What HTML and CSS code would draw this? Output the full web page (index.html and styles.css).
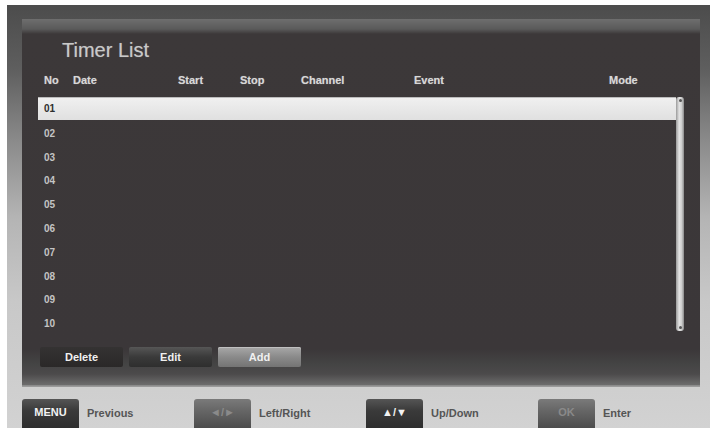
FILE: index.html
```html
<!DOCTYPE html>
<html>
<head>
<meta charset="utf-8">
<link rel="stylesheet" href="styles.css">
</head>
<body>
<div class="frame">
  <div class="panel">
    <div class="title">Timer List</div>
    <div class="head">
      <span>No</span><span>Date</span><span>Start</span><span>Stop</span><span>Channel</span><span>Event</span><span>Mode</span>
    </div>
    <div class="listwrap">
      <div class="list">
        <div class="row sel">01</div>
        <div class="row">02</div>
        <div class="row">03</div>
        <div class="row">04</div>
        <div class="row">05</div>
        <div class="row">06</div>
        <div class="row">07</div>
        <div class="row">08</div>
        <div class="row">09</div>
        <div class="row">10</div>
      </div>
      <div class="scroll"><span class="dot"></span><span class="dot"></span></div>
    </div>
    <div class="btns">
      <div class="btn del">Delete</div>
      <div class="btn edit">Edit</div>
      <div class="btn add">Add</div>
    </div>
  </div>
  <div class="footer">
    <div class="group"><div class="key dark">MENU</div><span class="lbl">Previous</span></div>
    <div class="group"><div class="key grey">◄/►</div><span class="lbl">Left/Right</span></div>
    <div class="group"><div class="key dark">▲/▼</div><span class="lbl">Up/Down</span></div>
    <div class="group"><div class="key grey">OK</div><span class="lbl">Enter</span></div>
  </div>
</div>
</body>
</html>
```

FILE: styles.css
```css
html, body {
  margin: 0;
  padding: 0;
  background: #ffffff;
}
body {
  font-family: "Liberation Sans", Arial, sans-serif;
  width: 718px;
  height: 437px;
  overflow: hidden;
}
.frame {
  margin: 5px 8px 0 7px;
  width: 703px;
  height: 423px;
  box-sizing: border-box;
  padding: 14px 10px 0 15px;
  background: linear-gradient(to bottom, #4c4c4c 0%, #5e5e5e 15%, #8a8a8a 32%, #b4b4b4 50%, #c8c8c8 70%, #d2d2d2 100%);
  overflow: hidden;
}
.panel {
  height: 367px;
  box-sizing: border-box;
  padding-top: 19px;
  background: linear-gradient(to bottom, #6e6e6e 0px, #5a5a5a 10px, #3c3839 15px, #3b3739 330px, #444 345px, #4c4a4b 355px, #6d6d6d 366px);
  border-bottom: 1px solid #8c8c8c;
  box-shadow: 0 1px 0 #9a9a9a;
}
.title {
  margin-left: 40px;
  font-size: 20px;
  line-height: 24px;
  color: #c9c9c9;
  text-shadow: 0 0 1px rgba(200,200,200,0.5);
}
.head {
  margin-top: 11px;
  padding-left: 22px;
  display: grid;
  grid-template-columns: 29px 105px 62px 61px 113px 195px auto;
  font-size: 11px;
  font-weight: bold;
  line-height: 14px;
  color: #d8d8d8;
  text-shadow: 0 0 1px rgba(255,255,255,0.4);
}
.listwrap {
  margin-top: 10px;
  margin-left: 16px;
  display: flex;
  width: 647px;
}
.list {
  width: 638px;
}
.row {
  height: 23.8px;
  line-height: 23.8px;
  padding-left: 6px;
  font-size: 10px;
  font-weight: bold;
  color: #c4c4c4;
}
.row.sel {
  height: 22px;
  line-height: 22px;
  margin-bottom: 1.8px;
  background: linear-gradient(to bottom, #f0f0f0, #e0e0e0);
  border-top: 1px solid #bcbcbc;
  color: #2e2e2e;
}
.scroll {
  width: 8px;
  height: 234px;
  background: linear-gradient(to right, #9a9a9a, #e4e4e4 40%, #cfcfcf 70%, #8a8a8a);
  border-radius: 3px;
  display: flex;
  flex-direction: column;
  justify-content: space-between;
  align-items: center;
  padding: 2px 0;
  box-sizing: border-box;
}
.dot {
  width: 3px;
  height: 3px;
  border-radius: 50%;
  background: #555;
}
.btns {
  margin-top: 11px;
  margin-left: 18px;
  display: flex;
  gap: 6px;
}
.btn {
  width: 83px;
  height: 20px;
  line-height: 20px;
  text-align: center;
  font-size: 11px;
  font-weight: bold;
  color: #f0f0f0;
  border-radius: 2px;
}
.btn.del {
  background: linear-gradient(to bottom, #343232, #2a2828);
}
.btn.edit {
  background: linear-gradient(to bottom, #565656, #3a3a3a 50%, #2e2e2e);
}
.btn.add {
  background: linear-gradient(to bottom, #a8a8a8, #8a8a8a 50%, #747474);
  box-shadow: inset 0 1px 0 #c0c0c0;
}
.footer {
  display: flex;
  margin-top: 13px;
}
.group {
  width: 172px;
  flex-shrink: 0;
  display: flex;
  align-items: center;
  gap: 8px;
}
.key {
  width: 57px;
  height: 29px;
  line-height: 27px;
  text-align: center;
  font-size: 11px;
  font-weight: bold;
  border-radius: 3px 3px 0 0;
}
.key.dark {
  background: linear-gradient(to bottom, #555, #3a3a3a 40%, #2e2e2e);
  color: #f2f2f2;
}
.key.grey {
  background: linear-gradient(to bottom, #7a7a7a, #666 40%, #4c4c4c);
  color: #8a8a8a;
}
.lbl {
  font-size: 11px;
  font-weight: bold;
  color: #555;
  margin-top: -2px;
}
```
